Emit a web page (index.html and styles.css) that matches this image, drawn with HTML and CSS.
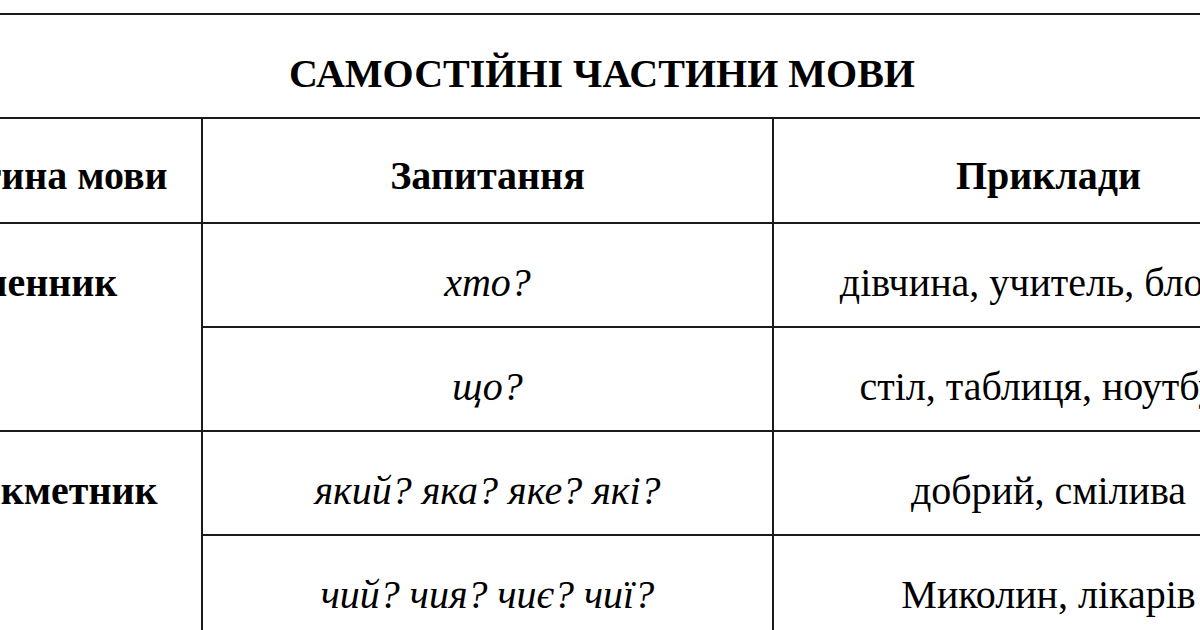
FILE: index.html
```html
<!DOCTYPE html>
<html lang="uk">
<head>
<meta charset="utf-8">
<title>Самостійні частини мови</title>
<link rel="stylesheet" href="styles.css">
</head>
<body>
<div class="sheet">
  <table class="parts">
    <colgroup>
      <col class="c1">
      <col class="c2">
      <col class="c3">
    </colgroup>
    <tr class="title-row">
      <td colspan="3" class="title">САМОСТІЙНІ ЧАСТИНИ МОВИ</td>
    </tr>
    <tr class="head-row">
      <th>Частина мови</th>
      <th>Запитання</th>
      <th>Приклади</th>
    </tr>
    <tr>
      <td rowspan="2" class="part">Іменник</td>
      <td class="q">хто?</td>
      <td>дівчина, учитель, блогер</td>
    </tr>
    <tr>
      <td class="q">що?</td>
      <td>стіл, таблиця, ноутбук</td>
    </tr>
    <tr>
      <td rowspan="2" class="part">Прикметник</td>
      <td class="q">який? яка? яке? які?</td>
      <td>добрий, смілива</td>
    </tr>
    <tr>
      <td class="q">чий? чия? чиє? чиї?</td>
      <td>Миколин, лікарів</td>
    </tr>
  </table>
</div>
</body>
</html>
```

FILE: styles.css
```css
html, body {
  margin: 0;
  padding: 0;
  background: #ffffff;
}

body {
  width: 1200px;
  height: 630px;
  overflow: hidden;
}

.sheet {
  padding-top: 13px;
  margin-left: -121px;
}

.parts {
  border-collapse: collapse;
  table-layout: fixed;
  width: 1444px;
  font-family: "Liberation Serif", "Times New Roman", serif;
  font-size: 40px;
  color: #000;
}

.c1 { width: 322px; }
.c2 { width: 571px; }
.c3 { width: 551px; }

.parts td,
.parts th {
  border: 2px solid #1a1a1a;
  text-align: center;
  vertical-align: top;
  line-height: 46px;
  padding: 36px 0 0 0;
  white-space: nowrap;
}

.parts tr {
  height: 104.3px;
}

.title-row td {
  border-left-color: transparent;
  border-right-color: transparent;
}

.title {
  font-weight: bold;
  font-size: 40px;
  padding-top: 36px !important;
}

.head-row th {
  font-weight: bold;
  padding-top: 34px;
}

.part {
  font-weight: bold;
}

.q {
  font-style: italic;
}
```
